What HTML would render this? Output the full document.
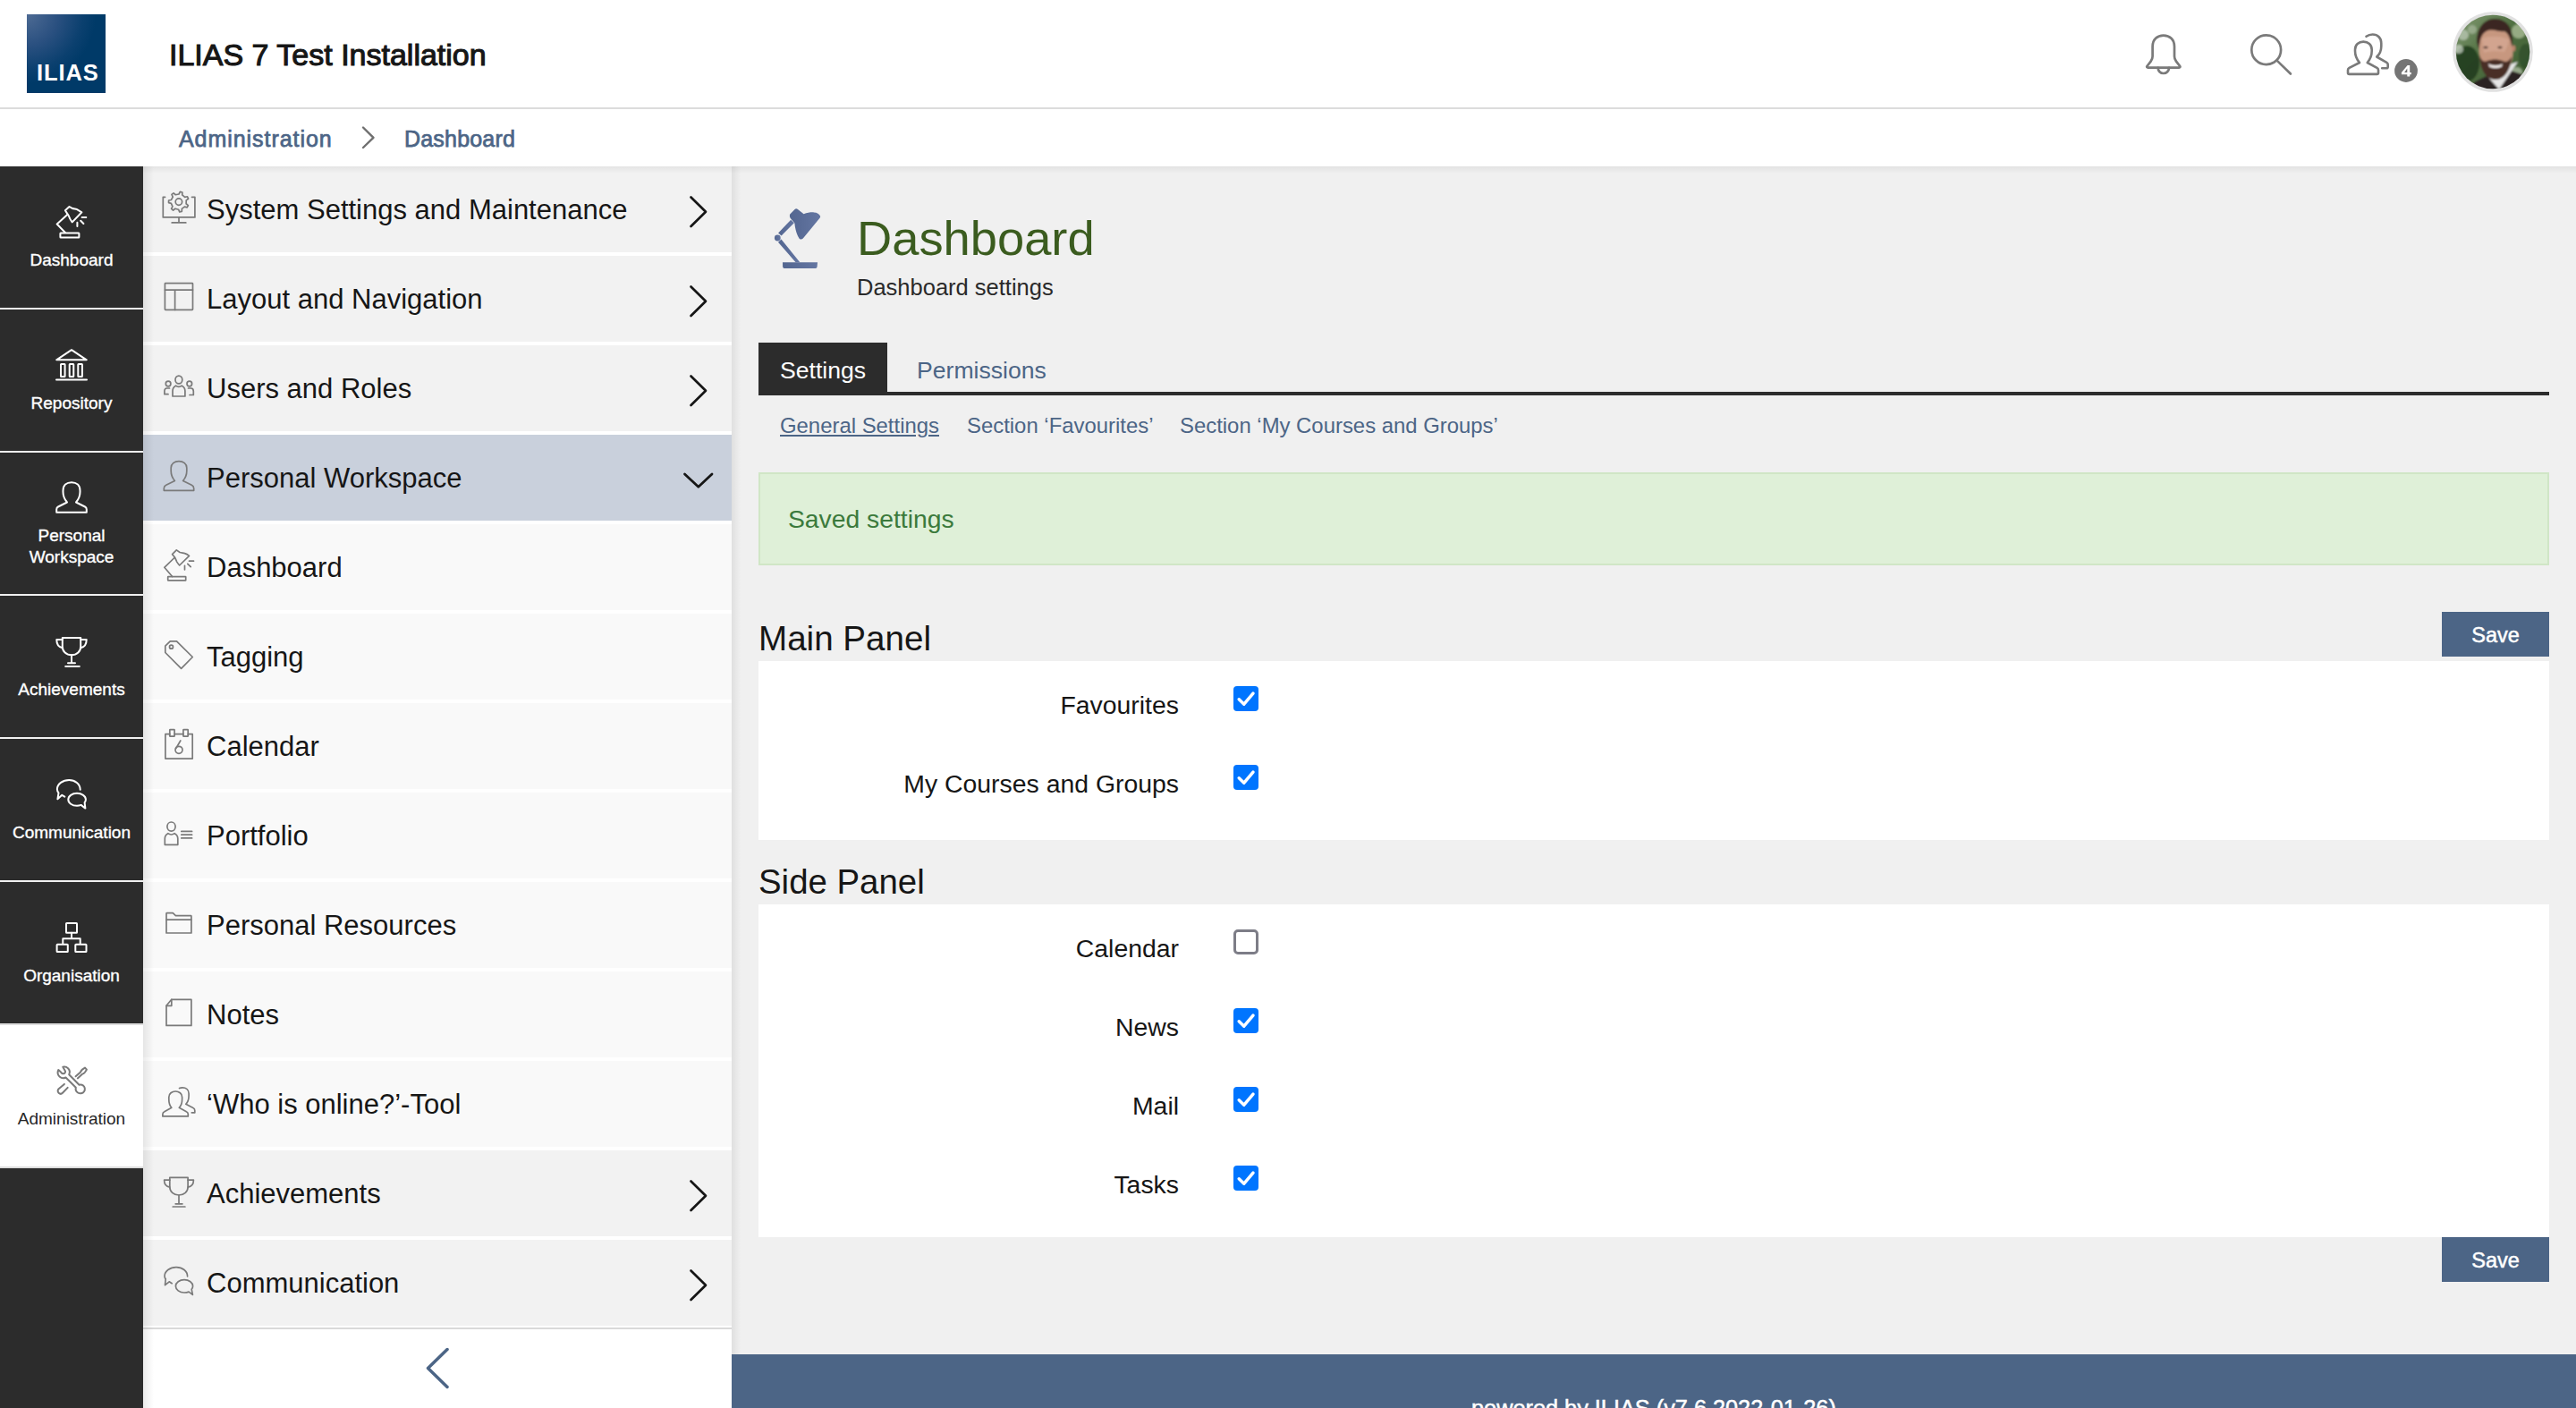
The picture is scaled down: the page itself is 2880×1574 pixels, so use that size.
<!DOCTYPE html>
<html><head><meta charset="utf-8"><style>
@media (max-width: 2000px) { html { zoom: 0.5; } }
html,body{margin:0;padding:0;}
body{width:2880px;height:1574px;overflow:hidden;position:relative;background:#f0f0f0;font-family:"Liberation Sans",sans-serif;color:#161616;}
.a{position:absolute;}
.t{position:absolute;line-height:1;white-space:nowrap;}
</style></head><body>
<div class="a" style="left:0;top:0;width:2880px;height:120px;background:#fff;border-bottom:2px solid #dcdcdc"></div>
<div class="a" style="left:30px;top:16px;width:88px;height:88px;background:radial-gradient(circle at 0% 0%,#4e6b94 0%,#2a5080 28%,#0b406f 50%,#003a68 62%)"></div>
<div class="t" style="left:41px;top:68.84px;font-size:25.5px;font-weight:700;color:#fff;letter-spacing:0.9px">ILIAS</div>
<div class="t" style="left:189px;top:43.72px;font-size:34px;color:#161616;-webkit-text-stroke:1.1px #161616">ILIAS 7 Test Installation</div>
<svg class="a" style="left:2390px;top:30px" width="60" height="60" viewBox="0 0 60 60" fill="none" stroke="#7a7a7a" stroke-width="2.7" stroke-linejoin="round" stroke-linecap="round">
<path d="M16.6,33 L16.6,22 C16.6,14 22,9.6 28.8,9.6 C35.6,9.6 41,14 41,22 L41,33 C41,35.5 41.8,37 43,38.6 L47.2,44 C47.8,44.9 47.3,45.6 46.2,45.6 L11.4,45.6 C10.3,45.6 9.8,44.9 10.4,44 L14.6,38.6 C15.8,37 16.6,35.5 16.6,33 Z"/>
<path d="M22.6,45.8 A6.2,6.2 0 0 0 35,45.8"/></svg>
<svg class="a" style="left:2500px;top:30px" width="70" height="60" viewBox="0 0 70 60" fill="none" stroke="#7a7a7a" stroke-width="2.7" stroke-linecap="round">
<circle cx="33.7" cy="25.7" r="16.4"/><path d="M46.1,38.1 L60.9,52.5"/></svg>
<svg class="a" style="left:2600px;top:20px" width="120" height="80" viewBox="0 0 120 80" fill="none" stroke="#7a7a7a" stroke-width="2.6" stroke-linejoin="round" stroke-linecap="round">
<path d="M38,50 C34.5,46 33,42 33,37 L33,35.5 C33,30 37,26.6 42.3,26.6 C47.6,26.6 51.7,30 51.7,35.5 L51.7,37 C51.7,42 50.2,46 46.7,50 L57.5,55.8 C58.8,56.6 59,57.5 59,58.3 L59,61.5 C59,62.4 58.4,62.9 57.5,62.9 L26.5,62.9 C25.6,62.9 25,62.4 25,61.5 L25,58.3 C25,57.5 25.2,56.6 26.5,55.8 Z"/>
<path d="M45.5,20.8 C47.5,19.3 50,18.5 52.6,18.5 C58.4,18.5 62.3,22.5 62.3,28.5 L62.3,31.5 C62.3,36.5 60.8,40.5 57.2,43.5 L68.3,49.8 C69.4,50.5 69.7,51.2 69.7,52 L69.7,54.8 C69.7,55.8 69.1,56.3 68.2,56.3 L63.2,56.3"/>
</svg>
<svg class="a" style="left:2677px;top:66px" width="26" height="26" viewBox="0 0 26 26"><circle cx="13" cy="13" r="12.9" fill="#757575"/><path d="M14.6,7 H17.2 V14.9 H18.8 V17.3 H17.2 V19.6 H14.3 V17.3 H7.9 V15 Z M14.3,14.9 V10.6 L11.1,14.9 Z" fill="#fff"/></svg>
<svg class="a" style="left:2742px;top:13px" width="90" height="90" viewBox="0 0 90 90">
<defs><clipPath id="avc"><circle cx="45" cy="45" r="41.3"/></clipPath>
<linearGradient id="avbg" x1="0" y1="0" x2="1" y2="1"><stop offset="0" stop-color="#8aa27a"/><stop offset="0.45" stop-color="#4f6e40"/><stop offset="1" stop-color="#3b5a30"/></linearGradient>
<filter id="avb" x="-20%" y="-20%" width="140%" height="140%"><feGaussianBlur stdDeviation="0.9"/></filter></defs>
<circle cx="45" cy="45" r="44.8" fill="#e1e1e1"/>
<g clip-path="url(#avc)" filter="url(#avb)">
<rect x="0" y="0" width="90" height="90" fill="url(#avbg)"/>
<ellipse cx="16" cy="58" rx="14" ry="20" fill="#1f3a1c" opacity="0.85"/>
<circle cx="12" cy="26" r="6" fill="#b7c4b0" opacity="0.8"/><circle cx="7" cy="42" r="5" fill="#cfd8cc" opacity="0.7"/><circle cx="22" cy="20" r="5" fill="#a8b89c" opacity="0.7"/>
<circle cx="74" cy="22" r="8" fill="#a9bb95" opacity="0.8"/><ellipse cx="82" cy="50" rx="8" ry="14" fill="#2f4d2a" opacity="0.8"/><circle cx="72" cy="68" r="6" fill="#b9c6ae" opacity="0.7"/>
<path d="M18,88 L24,79 L40,71 L62,65 L78,70 L86,90 Z" fill="#2a2222"/>
<path d="M36,69 L52,87 L73,56 L61,60 L50,70 Z" fill="#e6e6e6"/><path d="M46,84 L52,88 L58,84 L54,90 L48,90 Z" fill="#1e1a1a"/>
<path d="M29.5,40 C29,26 35,19 47,19 C60,19 67,28 67.5,42 C68,58 62,72 48,72.5 C35,73 30,58 29.5,40 Z" fill="#c7977f"/>
<path d="M33,30 C40,27 55,27 63,31 C62,38 60,42 58,45 C50,44 42,44 35,46 C34,40 33.5,35 33,30 Z" fill="#d4a793" opacity="0.8"/>
<path d="M27,34 C27,16 37,8 47,8 C60,8 67,17 67,33 L66.5,40 C65,32 63,24 58,22 C53,23 48,20 42,20.5 C36,21 33,26 31.5,30 C30.5,33 30,38 29.5,42 Z" fill="#3b2520"/>
<path d="M30,48 C30.5,66 38,76 48,76 C58,76 65,66 66,50 C63,56 60,57 56,55 C51,53 44,53 39,55 C35,57 32,55 30,48 Z" fill="#4a2f26"/>
<path d="M40,58 C44,61 52,61 56,58 L55,61.5 C51,63.5 45,63.5 41,61.5 Z" fill="#f2ecea"/>
<ellipse cx="37" cy="40" rx="2.6" ry="1.3" fill="#4a302a"/><ellipse cx="53" cy="40" rx="2.6" ry="1.3" fill="#4a302a"/>
<ellipse cx="68.5" cy="41" rx="1.8" ry="3.5" fill="#b9836c"/>
</g></svg>
<div class="a" style="left:0;top:122px;width:2880px;height:64px;background:#fff"></div>
<div class="t" style="left:200px;top:142.84px;font-size:25px;color:#4c6586;letter-spacing:0.95px;-webkit-text-stroke:0.75px #4c6586">Administration</div>
<div class="t" style="left:452px;top:142.84px;font-size:25px;color:#4c6586;letter-spacing:0.2px;-webkit-text-stroke:0.75px #4c6586">Dashboard</div>
<svg class="a" style="left:400px;top:138px" width="24" height="32" viewBox="0 0 24 32" fill="none" stroke="#6f6f6f" stroke-width="2.4" stroke-linecap="round" stroke-linejoin="round"><path d="M6,4.5 L17.5,15.8 L6,27"/></svg>
<div class="a" style="left:0;top:186px;width:160px;height:1388px;background:#2c2c2c"></div>
<div class="a" style="left:0;top:186px;width:160px;height:158px;background:#2c2c2c"></div>
<div class="a" style="left:0;top:344px;width:160px;height:2px;background:#f0f0f0"></div>
<svg class="a" style="left:62px;top:230px" width="36" height="36" viewBox="0 0 36 36" overflow="visible"><g fill="none" stroke="#fff" stroke-width="2" stroke-linejoin="round" stroke-linecap="round"><path d="M10.9,5.2 L15.5,1 L18.4,2.7 C20.5,3.4 22.3,3.5 24.1,4.1 L29.4,7.3 L18.7,18.4 C16.8,16 15.6,13.5 14.8,11.25 L13.4,9.1 Z"/><path d="M13.2,10 L1.7,20.5 L10.9,30"/><rect x="5.4" y="30.6" width="21" height="4.8" rx="0.5"/><path d="M29.6,13 H34.3 M28.2,16.8 L31.4,20 M24.4,18.8 V23"/></g></svg>
<div class="t" style="left:0;width:160px;text-align:center;top:280.92px;font-size:19px;color:#fff;-webkit-text-stroke:0.35px #fff">Dashboard</div>
<div class="a" style="left:0;top:346px;width:160px;height:158px;background:#2c2c2c"></div>
<div class="a" style="left:0;top:504px;width:160px;height:2px;background:#f0f0f0"></div>
<svg class="a" style="left:62px;top:390px" width="36" height="36" viewBox="0 0 36 36" overflow="visible"><g fill="none" stroke="#fff" stroke-width="2" stroke-linejoin="round" stroke-linecap="round"><path d="M1.2,12.3 L18,1.2 L34.8,12.3 Z"/><rect x="6" y="17" width="4.6" height="14" rx="0.5"/><rect x="15.7" y="17" width="4.6" height="14" rx="0.5"/><rect x="25.3" y="17" width="4.6" height="14" rx="0.5"/><path d="M1,34.6 H35"/></g></svg>
<div class="t" style="left:0;width:160px;text-align:center;top:440.92px;font-size:19px;color:#fff;-webkit-text-stroke:0.35px #fff">Repository</div>
<div class="a" style="left:0;top:506px;width:160px;height:158px;background:#2c2c2c"></div>
<div class="a" style="left:0;top:664px;width:160px;height:2px;background:#f0f0f0"></div>
<svg class="a" style="left:62px;top:538px" width="36" height="36" viewBox="0 0 36 36" overflow="visible"><g fill="none" stroke="#fff" stroke-width="2" stroke-linejoin="round" stroke-linecap="round"><path d="M13,23.5 C9.5,19.5 8.5,16 8.5,12 L8.5,10.5 C8.5,4.5 12.5,1.2 18,1.2 C23.5,1.2 27.5,4.5 27.5,10.5 L27.5,12 C27.5,16 26.5,19.5 23,23.5 L33,28.5 C34.5,29.3 34.8,30.5 34.8,31.5 L34.8,34.8 L1.2,34.8 L1.2,31.5 C1.2,30.5 1.5,29.3 3,28.5 Z"/></g></svg>
<div class="t" style="left:0;width:160px;text-align:center;top:588.92px;font-size:19px;color:#fff;-webkit-text-stroke:0.35px #fff">Personal</div>
<div class="t" style="left:0;width:160px;text-align:center;top:612.92px;font-size:19px;color:#fff;-webkit-text-stroke:0.35px #fff">Workspace</div>
<div class="a" style="left:0;top:666px;width:160px;height:158px;background:#2c2c2c"></div>
<div class="a" style="left:0;top:824px;width:160px;height:2px;background:#f0f0f0"></div>
<svg class="a" style="left:62px;top:710px" width="36" height="36" viewBox="0 0 36 36" overflow="visible"><g fill="none" stroke="#fff" stroke-width="2" stroke-linejoin="round" stroke-linecap="round"><path d="M7.8,3 H28.2 V13 C28.2,18 24,22.3 18,22.3 C12,22.3 7.8,18 7.8,13 Z"/><path d="M7.8,5 H1.3 C1.3,10 4,13.5 7.8,14.2 M28.2,5 H34.7 C34.7,10 32,13.5 28.2,14.2"/><path d="M18,22.3 V31 M14,31.3 H22 M11.2,35 H26.8"/></g></svg>
<div class="t" style="left:0;width:160px;text-align:center;top:760.92px;font-size:19px;color:#fff;-webkit-text-stroke:0.35px #fff">Achievements</div>
<div class="a" style="left:0;top:826px;width:160px;height:158px;background:#2c2c2c"></div>
<div class="a" style="left:0;top:984px;width:160px;height:2px;background:#f0f0f0"></div>
<svg class="a" style="left:62px;top:870px" width="36" height="36" viewBox="0 0 36 36" overflow="visible"><g fill="none" stroke="#fff" stroke-width="2" stroke-linejoin="round" stroke-linecap="round"><path d="M27.7,12.8 C27.7,6.5 21.8,1.9 15.3,1.9 C8.2,1.9 1.9,6.3 1.9,12.3 C1.9,13.8 2.5,15.2 3.5,16.4 L2.4,23.3 L7.3,18.8 L10.3,20.6"/><path d="M24,16.8 C29.4,16.8 33.9,19.9 33.9,23.8 C33.9,25 33.4,26.2 32.6,27.2 L33.4,33.6 L28.6,29.9 C27.1,30.5 25.6,30.8 24,30.8 C18.6,30.8 14.3,27.7 14.3,23.8 C14.3,19.9 18.6,16.8 24,16.8 Z"/></g></svg>
<div class="t" style="left:0;width:160px;text-align:center;top:920.92px;font-size:19px;color:#fff;-webkit-text-stroke:0.35px #fff">Communication</div>
<div class="a" style="left:0;top:986px;width:160px;height:158px;background:#2c2c2c"></div>
<div class="a" style="left:0;top:1144px;width:160px;height:2px;background:#dedede"></div>
<svg class="a" style="left:62px;top:1030px" width="36" height="36" viewBox="0 0 36 36" overflow="visible"><g fill="none" stroke="#fff" stroke-width="2" stroke-linejoin="round" stroke-linecap="round"><rect x="12" y="1.9" width="12" height="10.9" rx="0.6"/><path d="M18,12.8 V19.3 M8.3,24.8 V19.3 H27.7 V24.8"/><rect x="1.6" y="25.8" width="12.2" height="8.2" rx="0.6"/><rect x="22.3" y="25.8" width="12.2" height="8.2" rx="0.6"/></g></svg>
<div class="t" style="left:0;width:160px;text-align:center;top:1080.92px;font-size:19px;color:#fff;-webkit-text-stroke:0.35px #fff">Organisation</div>
<div class="a" style="left:0;top:1146px;width:160px;height:158px;background:#fff"></div>
<div class="a" style="left:0;top:1304px;width:160px;height:2px;background:#dedede"></div>
<svg class="a" style="left:62px;top:1190px" width="36" height="36" viewBox="0 0 36 36" overflow="visible"><g fill="none" stroke="#7a7a7a" stroke-width="2" stroke-linejoin="round" stroke-linecap="round"><path d="M3.3,6 C2.2,8.5 2.3,11.5 4.5,13.5 C6.5,15.3 9.5,15.6 11.5,14.5 L22.8,25.8 C22.3,28 23,30.2 25,31.5 C27.3,33 30.5,32.5 32,30.2 C33.5,28 33,24.8 30.8,23.3 C29.5,22.5 28,22.3 26.5,22.7 L15.2,11.3 C16.3,9 16,6.3 14,4.3 C12.3,2.6 10,2.3 8.3,2.8 L11,7.5 C11.3,9 10.3,10.2 8.8,10.3 C7.6,10.4 6.8,9.5 6.3,8.8 Z"/><path d="M9.9,21.9 L3.6,27.3 C2.3,28.5 2.3,30.5 3.6,31.8 C4.9,33 6.8,33 8,31.8 L13.7,25.9 M22.6,13.3 L27.8,8.8 C28.4,7.4 29,6.4 30,5.6 L33,3.6 L34.9,5.7 L32.9,8.7 C32.2,9.7 31.2,10.4 29.7,10.9 L24.8,15.4"/></g></svg>
<div class="t" style="left:0;width:160px;text-align:center;top:1240.92px;font-size:19px;color:#262626;-webkit-text-stroke:0px #262626">Administration</div>
<div class="a" style="left:160px;top:186px;width:658px;height:1388px;background:#fff"></div>
<div class="a" style="left:160px;top:186px;width:658px;height:96px;background:#f2f2f2"></div>
<div class="t" style="left:231px;top:219.26px;font-size:31px;color:#161616">System Settings and Maintenance</div>
<svg class="a" style="left:170px;top:200px" width="60" height="60" viewBox="0 0 60 60"><g fill="none" stroke="#7a7a7a" stroke-width="1.7" stroke-linejoin="round" stroke-linecap="round"><path d="M14.6,20.3 H12.3 V42.9 H47.9 V20.3 H44.5"/><path d="M30,42.9 V48.9 M22.2,48.9 H37.8"/><path d="M38.13,27.73 L40.38,29.56 L39.18,31.90 L36.38,31.13 L33.33,33.44 L33.31,36.34 L30.73,36.86 L29.58,34.20 L25.87,33.25 L23.59,35.04 L21.57,33.35 L22.94,30.79 L21.37,27.30 L18.55,26.63 L18.61,24.00 L21.47,23.47 L23.22,20.07 L21.98,17.44 L24.08,15.86 L26.27,17.76 L30.02,17.00 L31.30,14.40 L33.85,15.05 L33.73,17.95 L36.66,20.41 L39.49,19.79 L40.57,22.19 L38.23,23.90 Z" transform="translate(0,0)"/><circle cx="29.9" cy="25.6" r="3.7"/></g></svg>
<svg class="a" style="left:760px;top:216px" width="36" height="40" viewBox="0 0 36 40" fill="none" stroke="#161616" stroke-width="2.7" stroke-linecap="round" stroke-linejoin="round"><path d="M12.5,4.5 L29,20.8 L12.5,37"/></svg>
<div class="a" style="left:160px;top:286px;width:658px;height:96px;background:#f2f2f2"></div>
<div class="t" style="left:231px;top:319.26px;font-size:31px;color:#161616">Layout and Navigation</div>
<svg class="a" style="left:170px;top:300px" width="60" height="60" viewBox="0 0 60 60"><g fill="none" stroke="#7a7a7a" stroke-width="1.7" stroke-linejoin="round" stroke-linecap="round"><rect x="14.4" y="16.6" width="31.1" height="29.8" rx="0.6"/><path d="M14.4,24.1 H45.5 M25.6,24.1 V46.4"/></g></svg>
<svg class="a" style="left:760px;top:316px" width="36" height="40" viewBox="0 0 36 40" fill="none" stroke="#161616" stroke-width="2.7" stroke-linecap="round" stroke-linejoin="round"><path d="M12.5,4.5 L29,20.8 L12.5,37"/></svg>
<div class="a" style="left:160px;top:386px;width:658px;height:96px;background:#f2f2f2"></div>
<div class="t" style="left:231px;top:419.26px;font-size:31px;color:#161616">Users and Roles</div>
<svg class="a" style="left:170px;top:400px" width="60" height="60" viewBox="0 0 60 60"><g fill="none" stroke="#7a7a7a" stroke-width="1.7" stroke-linejoin="round" stroke-linecap="round"><ellipse cx="29.9" cy="24.5" rx="3.9" ry="4.4"/><path d="M26.5,31.2 C27.5,32 28.7,32.3 29.9,32.3 C31.1,32.3 32.3,32 33.3,31.2 C35.5,32.3 36.9,34.5 36.9,37 V43 H23 V37 C23,34.5 24.4,32.3 26.5,31.2 Z"/><circle cx="18.1" cy="29" r="2.8"/><circle cx="41.8" cy="29" r="2.8"/><path d="M19.5,34 H16.5 C14.8,34 13.9,35.5 13.9,37.5 V40.7 H18"/><path d="M40.5,34 H43.5 C45.2,34 46.3,35.5 46.3,37.5 V41.5 H42"/></g></svg>
<svg class="a" style="left:760px;top:416px" width="36" height="40" viewBox="0 0 36 40" fill="none" stroke="#161616" stroke-width="2.7" stroke-linecap="round" stroke-linejoin="round"><path d="M12.5,4.5 L29,20.8 L12.5,37"/></svg>
<div class="a" style="left:160px;top:486px;width:658px;height:96px;background:#c9d0dc"></div>
<div class="t" style="left:231px;top:519.26px;font-size:31px;color:#161616">Personal Workspace</div>
<svg class="a" style="left:170px;top:500px" width="60" height="60" viewBox="0 0 60 60"><g fill="none" stroke="#7a7a7a" stroke-width="1.7" stroke-linejoin="round" stroke-linecap="round"><path d="M25.4,37.5 C22,33.5 21.2,30 21.2,26.5 L21.2,23 C21.2,18.5 25,15.7 30,15.7 C35,15.7 38.8,18.5 38.8,23 L38.8,26.5 C38.8,30 38,33.5 34.6,37.5 L44.3,42.3 C46.3,43.3 46.7,44.8 46.7,46 L46.7,48.3 L13.3,48.3 L13.3,46 C13.3,44.8 13.7,43.3 15.7,42.3 Z"/></g></svg>
<svg class="a" style="left:760px;top:522px" width="40" height="28" viewBox="0 0 40 28" fill="none" stroke="#161616" stroke-width="2.8" stroke-linecap="round" stroke-linejoin="round"><path d="M5.5,8 L20.8,22.3 L36,8"/></svg>
<div class="a" style="left:160px;top:586px;width:658px;height:96px;background:#f9f9f9"></div>
<div class="t" style="left:231px;top:619.26px;font-size:31px;color:#161616">Dashboard</div>
<svg class="a" style="left:170px;top:600px" width="60" height="60" viewBox="0 0 60 60"><g fill="none" stroke="#7a7a7a" stroke-width="1.7" stroke-linejoin="round" stroke-linecap="round"><path d="M22.6,19.6 L27.3,14.9 L31.1,17.5 C33,18 35,18.2 36.5,18.6 C38.5,19.2 40.2,20.3 41.5,21.3 L30.7,32 C29.3,30.5 28.3,29 27.7,28.1 C27,26.5 26.3,24.5 25.4,23 Z"/><path d="M25,23.5 L13.8,34.3 L22.6,44.5"/><rect x="17.7" y="44.7" width="20" height="4.1" rx="0.4"/><path d="M41.5,27.2 H46.5 M39.8,30.3 L43.2,33.6 M36.5,32.3 V36.8"/></g></svg>
<div class="a" style="left:160px;top:686px;width:658px;height:96px;background:#f9f9f9"></div>
<div class="t" style="left:231px;top:719.26px;font-size:31px;color:#161616">Tagging</div>
<svg class="a" style="left:170px;top:700px" width="60" height="60" viewBox="0 0 60 60"><g fill="none" stroke="#7a7a7a" stroke-width="1.7" stroke-linejoin="round" stroke-linecap="round"><path d="M20.2,16.8 H27.5 L45.3,34.5 L32.6,47.3 L14.8,29.5 V22.2 Z"/><circle cx="21.5" cy="23.2" r="2"/></g></svg>
<div class="a" style="left:160px;top:786px;width:658px;height:96px;background:#f9f9f9"></div>
<div class="t" style="left:231px;top:819.26px;font-size:31px;color:#161616">Calendar</div>
<svg class="a" style="left:170px;top:800px" width="60" height="60" viewBox="0 0 60 60"><g fill="none" stroke="#7a7a7a" stroke-width="1.7" stroke-linejoin="round" stroke-linecap="round"><path d="M19.8,20.7 H14.9 V48.1 H45.2 V20.7 H40.3 M25.1,20.7 H34.9"/><rect x="19.8" y="15.6" width="5.3" height="7.6" rx="0.5"/><rect x="34.9" y="15.6" width="5.3" height="7.6" rx="0.5"/><circle cx="30" cy="38.3" r="4"/><path d="M31.8,28 L26.8,36.5"/></g></svg>
<div class="a" style="left:160px;top:886px;width:658px;height:96px;background:#f9f9f9"></div>
<div class="t" style="left:231px;top:919.26px;font-size:31px;color:#161616">Portfolio</div>
<svg class="a" style="left:170px;top:900px" width="60" height="60" viewBox="0 0 60 60"><g fill="none" stroke="#7a7a7a" stroke-width="1.7" stroke-linejoin="round" stroke-linecap="round"><ellipse cx="21.5" cy="24.1" rx="4.6" ry="5.1"/><path d="M17.8,31.7 C18.9,32.6 20.2,33 21.5,33 C22.8,33 24.1,32.6 25.2,31.7 C27.3,32.8 28.8,35 28.8,37.5 V44.3 H14.3 V37.5 C14.3,35 15.7,32.8 17.8,31.7 Z"/><path d="M32.8,29.4 H44.6 M32.8,33.2 H44.6 M32.8,36.9 H44.6"/></g></svg>
<div class="a" style="left:160px;top:986px;width:658px;height:96px;background:#f9f9f9"></div>
<div class="t" style="left:231px;top:1019.26px;font-size:31px;color:#161616">Personal Resources</div>
<svg class="a" style="left:170px;top:1000px" width="60" height="60" viewBox="0 0 60 60"><g fill="none" stroke="#7a7a7a" stroke-width="1.7" stroke-linejoin="round" stroke-linecap="round"><path d="M16,43 V21.3 C16,21 16.3,20.7 16.6,20.7 H23.3 L26.4,23.6 H43.3 C43.6,23.6 43.9,23.9 43.9,24.2 V43 Z"/><path d="M16,28.1 H43.9"/></g></svg>
<div class="a" style="left:160px;top:1086px;width:658px;height:96px;background:#f9f9f9"></div>
<div class="t" style="left:231px;top:1119.26px;font-size:31px;color:#161616">Notes</div>
<svg class="a" style="left:170px;top:1100px" width="60" height="60" viewBox="0 0 60 60"><g fill="none" stroke="#7a7a7a" stroke-width="1.7" stroke-linejoin="round" stroke-linecap="round"><path d="M21.8,17.3 H43.9 V46.4 H16 V24.3 Z"/><path d="M21.8,17.3 V24.3 H16"/></g></svg>
<div class="a" style="left:160px;top:1186px;width:658px;height:96px;background:#f9f9f9"></div>
<div class="t" style="left:231px;top:1219.26px;font-size:31px;color:#161616">&#8216;Who is online?&#8217;-Tool</div>
<svg class="a" style="left:170px;top:1200px" width="60" height="60" viewBox="0 0 60 60"><g fill="none" stroke="#7a7a7a" stroke-width="1.7" stroke-linejoin="round" stroke-linecap="round"><path d="M21.8,38.3 C19.3,35.5 18.8,32 18.8,29 L18.8,26.5 C18.8,22.5 22.2,20 26.2,20 C30.2,20 33.6,22.5 33.6,26.5 L33.6,29 C33.6,32 33,35.5 30.3,38.3 L38.4,42.7 C40,43.5 40.3,44.6 40.3,45.5 L40.3,47.9 L11.9,47.9 L11.9,45.5 C11.9,44.6 12.2,43.5 13.8,42.7 Z"/><path d="M30.5,16.5 C31.6,16 32.8,15.8 34,15.8 C38,15.8 41.1,18.3 41.1,22.5 L41.1,25 C41.1,28 40.6,31.5 37.8,34.3 L45.9,38.6 C47.5,39.4 47.8,40.5 47.8,41.4 L47.8,43.8 L44.3,43.8"/></g></svg>
<div class="a" style="left:160px;top:1286px;width:658px;height:96px;background:#f2f2f2"></div>
<div class="t" style="left:231px;top:1319.26px;font-size:31px;color:#161616">Achievements</div>
<svg class="a" style="left:170px;top:1300px" width="60" height="60" viewBox="0 0 60 60"><g fill="none" stroke="#7a7a7a" stroke-width="1.7" stroke-linejoin="round" stroke-linecap="round"><path d="M19.8,16.4 H40.1 V27 C40.1,32 36,36 30,36 C24,36 19.8,32 19.8,27 Z"/><path d="M19.8,19.2 H13.6 C13.6,23.5 16,26.5 19.8,27.2 M40.1,19.2 H46.4 C46.4,23.5 44,26.5 40.1,27.2"/><path d="M30,36 V45.8 M26.2,45.8 H33.9 M23.2,49 H36.9"/></g></svg>
<svg class="a" style="left:760px;top:1316px" width="36" height="40" viewBox="0 0 36 40" fill="none" stroke="#161616" stroke-width="2.7" stroke-linecap="round" stroke-linejoin="round"><path d="M12.5,4.5 L29,20.8 L12.5,37"/></svg>
<div class="a" style="left:160px;top:1386px;width:658px;height:96px;background:#f2f2f2"></div>
<div class="t" style="left:231px;top:1419.26px;font-size:31px;color:#161616">Communication</div>
<svg class="a" style="left:170px;top:1400px" width="60" height="60" viewBox="0 0 60 60"><g fill="none" stroke="#7a7a7a" stroke-width="1.7" stroke-linejoin="round" stroke-linecap="round"><path d="M39.6,26.8 C39.6,21 34,16.6 27,16.6 C20,16.6 14,21 14,26.5 C14,27.6 14.3,28.7 15.2,29.8 L14.5,36.6 L19.2,32.8 L22.2,34.7"/><path d="M36,30.7 C41.3,30.7 45.6,33.9 45.6,37.8 C45.6,39.1 45.1,40.3 44.2,41.3 L45.4,47.4 L41.1,44.1 C39.5,44.7 37.8,45 36,45 C30.7,45 26.4,41.8 26.4,37.8 C26.4,33.9 30.7,30.7 36,30.7 Z"/></g></svg>
<svg class="a" style="left:760px;top:1416px" width="36" height="40" viewBox="0 0 36 40" fill="none" stroke="#161616" stroke-width="2.7" stroke-linecap="round" stroke-linejoin="round"><path d="M12.5,4.5 L29,20.8 L12.5,37"/></svg>
<div class="a" style="left:160px;top:1484px;width:658px;height:2px;background:#d9d9d9"></div>
<svg class="a" style="left:468px;top:1500px" width="44" height="60" viewBox="0 0 44 60" fill="none" stroke="#4c6586" stroke-width="3.5" stroke-linecap="round" stroke-linejoin="round"><path d="M32,8.5 L10.5,29.5 L32,50.5"/></svg>
<div class="a" style="left:160px;top:186px;width:12px;height:1388px;background:linear-gradient(90deg,rgba(0,0,0,0.08),rgba(0,0,0,0))"></div>
<div class="a" style="left:818px;top:186px;width:2062px;height:1328px;background:#f0f0f0"></div>
<div class="a" style="left:818px;top:186px;width:10px;height:1328px;background:linear-gradient(90deg,rgba(0,0,0,0.07),rgba(0,0,0,0))"></div>
<div class="a" style="left:160px;top:186px;width:2720px;height:8px;background:linear-gradient(180deg,rgba(0,0,0,0.06),rgba(0,0,0,0))"></div>
<svg class="a" style="left:850px;top:220px" width="90" height="90" viewBox="0 0 90 90">
<defs><linearGradient id="lg" x1="0" x2="1" y1="0" y2="0"><stop offset="0" stop-color="#536690"/><stop offset="1" stop-color="#6476a2"/></linearGradient></defs>
<g fill="url(#lg)">
<path d="M33.2,19.5 L38.6,14 C39.5,13.1 40.7,13 41.6,13.8 L48.6,19.3 C52.5,17.8 56.5,17.2 60,17.4 C63.5,17.6 66,19 67,21.5 C67.3,22.3 67.1,23 66.5,23.8 L47.8,46.5 C46.5,48 44.3,48 43.3,46.3 C40.5,41.5 38.8,35 38.4,29.5 L34.4,24.8 C33,23.3 32.5,21.5 33.2,19.5 Z"/>
<path d="M34.2,25.8 L37.8,29.2 L23.6,43.6 L20.1,40.4 Z"/>
<circle cx="19.3" cy="46" r="3.4"/>
<path d="M20,50.7 L23.5,47.6 L44.3,73.2 L39.6,73.2 Z"/>
<path d="M25,73.2 H64 L63.6,78 C63.4,79.3 62.8,80 61.8,80 H26.8 C25.8,80 25.3,79.3 25.1,78 Z"/>
</g></svg>
<div class="t" style="left:958px;top:239.64px;font-size:54.3px;color:#3b5c1f">Dashboard</div>
<div class="t" style="left:958px;top:309.41px;font-size:25.5px;color:#2a2a2a">Dashboard settings</div>
<div class="a" style="left:848px;top:383px;width:144px;height:59px;background:#2c2c2c"></div>
<div class="a" style="left:848px;top:438px;width:2002px;height:4px;background:#2c2c2c"></div>
<div class="t" style="left:872px;top:401.48px;font-size:26.6px;color:#fff">Settings</div>
<div class="t" style="left:1025px;top:401.48px;font-size:26.6px;color:#4c6586">Permissions</div>
<div class="t" style="left:872px;top:463.77px;font-size:23.9px;color:#4c6586;text-decoration:underline;text-decoration-thickness:2px;text-underline-offset:1.5px">General Settings</div>
<div class="t" style="left:1081px;top:463.77px;font-size:23.9px;color:#4c6586">Section &#8216;Favourites&#8217;</div>
<div class="t" style="left:1319px;top:463.77px;font-size:23.9px;color:#4c6586">Section &#8216;My Courses and Groups&#8217;</div>
<div class="a" style="left:848px;top:528px;width:2002px;height:104px;background:#dff0d8;box-sizing:border-box;border:2px solid #d0e6c6"></div>
<div class="t" style="left:881px;top:566.04px;font-size:28.3px;color:#3b7a3c">Saved settings</div>
<div class="t" style="left:848px;top:694.63px;font-size:38.6px;color:#161616">Main Panel</div>
<div class="a" style="left:2730px;top:684px;width:120px;height:50px;background:#4c6586"></div>
<div class="t" style="left:2730px;width:120px;text-align:center;top:699.11px;font-size:23.5px;color:#fff;-webkit-text-stroke:0.5px #fff">Save</div>
<div class="a" style="left:848px;top:739px;width:2002px;height:200px;background:#fff"></div>
<div class="t" style="left:848px;top:966.99px;font-size:38.4px;color:#161616">Side Panel</div>
<div class="a" style="left:848px;top:1011px;width:2002px;height:372px;background:#fff"></div>
<div class="a" style="left:2730px;top:1383px;width:120px;height:50px;background:#4c6586"></div>
<div class="t" style="left:2730px;width:120px;text-align:center;top:1398.11px;font-size:23.5px;color:#fff;-webkit-text-stroke:0.5px #fff">Save</div>
<div class="t" style="right:1562px;top:773.96px;font-size:28.4px;color:#161616">Favourites</div>
<svg class="a" style="left:1379px;top:767px" width="28" height="28" viewBox="0 0 28 28"><rect x="0" y="0" width="28" height="28" rx="4" fill="#0075ff"/><path d="M6.2,14.8 L11.8,20.2 L22,8.2" fill="none" stroke="#fff" stroke-width="3.5" stroke-linecap="round" stroke-linejoin="round"/></svg>
<div class="t" style="right:1562px;top:861.96px;font-size:28.4px;color:#161616">My Courses and Groups</div>
<svg class="a" style="left:1379px;top:855px" width="28" height="28" viewBox="0 0 28 28"><rect x="0" y="0" width="28" height="28" rx="4" fill="#0075ff"/><path d="M6.2,14.8 L11.8,20.2 L22,8.2" fill="none" stroke="#fff" stroke-width="3.5" stroke-linecap="round" stroke-linejoin="round"/></svg>
<div class="t" style="right:1562px;top:1045.96px;font-size:28.4px;color:#161616">Calendar</div>
<svg class="a" style="left:1379px;top:1039px" width="28" height="28" viewBox="0 0 28 28"><rect x="1.5" y="1.5" width="25" height="25" rx="3.5" fill="#fff" stroke="#7d7d87" stroke-width="3"/></svg>
<div class="t" style="right:1562px;top:1133.96px;font-size:28.4px;color:#161616">News</div>
<svg class="a" style="left:1379px;top:1127px" width="28" height="28" viewBox="0 0 28 28"><rect x="0" y="0" width="28" height="28" rx="4" fill="#0075ff"/><path d="M6.2,14.8 L11.8,20.2 L22,8.2" fill="none" stroke="#fff" stroke-width="3.5" stroke-linecap="round" stroke-linejoin="round"/></svg>
<div class="t" style="right:1562px;top:1221.96px;font-size:28.4px;color:#161616">Mail</div>
<svg class="a" style="left:1379px;top:1215px" width="28" height="28" viewBox="0 0 28 28"><rect x="0" y="0" width="28" height="28" rx="4" fill="#0075ff"/><path d="M6.2,14.8 L11.8,20.2 L22,8.2" fill="none" stroke="#fff" stroke-width="3.5" stroke-linecap="round" stroke-linejoin="round"/></svg>
<div class="t" style="right:1562px;top:1309.96px;font-size:28.4px;color:#161616">Tasks</div>
<svg class="a" style="left:1379px;top:1303px" width="28" height="28" viewBox="0 0 28 28"><rect x="0" y="0" width="28" height="28" rx="4" fill="#0075ff"/><path d="M6.2,14.8 L11.8,20.2 L22,8.2" fill="none" stroke="#fff" stroke-width="3.5" stroke-linecap="round" stroke-linejoin="round"/></svg>
<div class="a" style="left:818px;top:1514px;width:2062px;height:60px;background:#4c6586"></div>
<div class="t" style="left:1645px;top:1561.58px;font-size:25.3px;color:#fff;-webkit-text-stroke:0.5px #fff">powered by ILIAS (v7.6 2022-01-26)</div>
</body></html>
